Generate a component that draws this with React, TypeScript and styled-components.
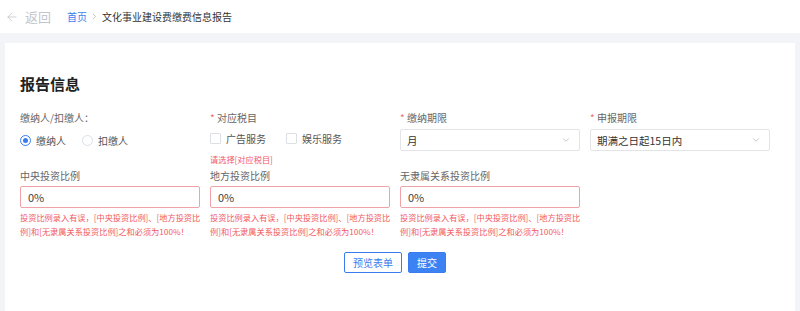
import styled, { createGlobalStyle } from "styled-components"
import { ArrowLeft, ChevronDown, ChevronRight } from "lucide-react"

/* ------------------------------------------- CSS ------------------------------------------ */
const GlobalStyle = createGlobalStyle`
    * { box-sizing: border-box; }
    body {
        margin: 0;
        background: #f3f4f7;
        font-family: "Noto Sans CJK SC", "Noto Sans", sans-serif;
        color: #333;
    }
`

const Page = styled.div`
    width: 800px;
    height: 311px;
    overflow: hidden;
    display: flex;
    flex-direction: column;
`

const TopBar = styled.header`
    height: 33px;
    background: #fff;
    display: flex;
    align-items: center;
    padding-left: 5px;
`

const Back = styled.div`
    display: flex;
    align-items: center;
    gap: 6px;
    color: #c3c6cc;
    font-size: 13px;
    margin-right: 16px;
`

const Crumbs = styled.nav`
    display: flex;
    align-items: center;
    gap: 3px;
    font-size: 10px;
    color: #333;

    a { color: #3a7cf0; text-decoration: none; }
    svg { color: #aaa; }
`

const Body = styled.main`
    flex: 1;
    padding: 10px 15px 0 5px;
    display: flex;
`

const Card = styled.section`
    flex: 1;
    background: #fff;
    padding: 30px 15px 0 15px;
`

const Title = styled.h2`
    margin: 0 0 15px;
    font-size: 15px;
    line-height: 22px;
    font-weight: 700;
    color: #222;
`

const Row = styled.div<{ $top?: number }>`
    display: grid;
    grid-template-columns: repeat(4, 190px);
    margin-top: ${({ $top }) => $top ?? 0}px;
`

const Field = styled.div`
    width: 180px;
    display: flex;
    flex-direction: column;
`

const Label = styled.div<{ $required?: boolean }>`
    font-size: 10px;
    line-height: 16px;
    color: #666;
    margin-bottom: ${({ $required }) => ($required ? 3 : 2)}px;

    &::before {
        content: ${({ $required }) => ($required ? '"* "' : '""')};
        color: #f56c6c;
    }
`

const Options = styled.div<{ $gap?: number }>`
    height: 22px;
    display: flex;
    align-items: center;
    gap: ${({ $gap }) => $gap ?? 16}px;
`

const Option = styled.label<{ $shift?: number }>`
    display: flex;
    align-items: center;
    gap: 5px;
    font-size: 10px;
    color: #555;
    margin-top: ${({ $shift }) => $shift ?? 0}px;
`

const Radio = styled.span<{ $checked?: boolean }>`
    width: 11px;
    height: 11px;
    border-radius: 50%;
    border: 1px solid ${({ $checked }) => ($checked ? "#3a7cf0" : "#dcdfe6")};
    display: flex;
    align-items: center;
    justify-content: center;

    &::after {
        content: "";
        width: 5px;
        height: 5px;
        border-radius: 50%;
        background: ${({ $checked }) => ($checked ? "#3a7cf0" : "transparent")};
    }
`

const Check = styled.span`
    width: 11px;
    height: 11px;
    border: 1px solid #dcdfe6;
    border-radius: 1px;
`

const Select = styled.div`
    height: 22px;
    border: 1px solid #e2e4e8;
    border-radius: 2px;
    padding: 0 8px 0 6px;
    display: flex;
    align-items: center;
    justify-content: space-between;
    font-size: 10.5px;
    color: #333;
    svg { color: #b8bcc4; }
`

const Input = styled.div`
    height: 22px;
    border: 1px solid #efa3a8;
    border-radius: 2px;
    padding: 0 7px;
    display: flex;
    align-items: center;
    font-size: 11px;
    color: #444;
`

const Error = styled.div<{ $top?: number }>`
    margin-top: ${({ $top }) => $top ?? 2}px;
    font-size: 8.2px;
    line-height: 14px;
    color: #f25a5f;
    white-space: nowrap;
`

const Actions = styled.div`
    display: flex;
    justify-content: center;
    gap: 6px;
    margin-top: 14px;
    padding-right: 10px;
`

const Button = styled.button<{ $primary?: boolean }>`
    height: 21px;
    padding: 0 8px;
    border-radius: 2px;
    font-family: inherit;
    font-size: 10px;
    border: 1px solid #3a7cf0;
    background: ${({ $primary }) => ($primary ? "#3d82f2" : "#fff")};
    color: ${({ $primary }) => ($primary ? "#fff" : "#3a7cf0")};
`

/* ------------------------------------------ DATA ------------------------------------------ */
const ratios = ["中央投资比例", "地方投资比例", "无隶属关系投资比例"]

/* ---------------------------------------- COMPONENT --------------------------------------- */
export default function App() {
    return (
        <Page>
            <GlobalStyle />
            <TopBar>
                <Back>
                    <ArrowLeft size={14} strokeWidth={1.4} />
                    <span>返回</span>
                </Back>
                <Crumbs>
                    <a href="#">首页</a>
                    <ChevronRight size={9} />
                    <span>文化事业建设费缴费信息报告</span>
                </Crumbs>
            </TopBar>

            <Body>
                <Card>
                    <Title>报告信息</Title>

                    <Row>
                        <Field>
                            <Label>缴纳人/扣缴人：</Label>
                            <Options>
                                <Option $shift={3}><Radio $checked />缴纳人</Option>
                                <Option $shift={3}><Radio />扣缴人</Option>
                            </Options>
                        </Field>
                        <Field>
                            <Label $required>对应税目</Label>
                            <Options $gap={20}>
                                <Option $shift={-4}><Check />广告服务</Option>
                                <Option $shift={-4}><Check />娱乐服务</Option>
                            </Options>
                            <Error $top={1}>请选择[对应税目]</Error>
                        </Field>
                        <Field>
                            <Label $required>缴纳期限</Label>
                            <Select>月<ChevronDown size={10} /></Select>
                        </Field>
                        <Field>
                            <Label $required>申报期限</Label>
                            <Select>期满之日起15日内<ChevronDown size={10} /></Select>
                        </Field>
                    </Row>

                    <Row $top={2}>
                        {ratios.map(item => (
                            <Field key={item}>
                                <Label>{item}</Label>
                                <Input>0%</Input>
                                <Error>
                                    投资比例录入有误，[中央投资比例]、[地方投资比
                                    <br />
                                    例]和[无隶属关系投资比例]之和必须为100%！
                                </Error>
                            </Field>
                        ))}
                    </Row>

                    <Actions>
                        <Button>预览表单</Button>
                        <Button $primary>提交</Button>
                    </Actions>
                </Card>
            </Body>
        </Page>
    )
}
